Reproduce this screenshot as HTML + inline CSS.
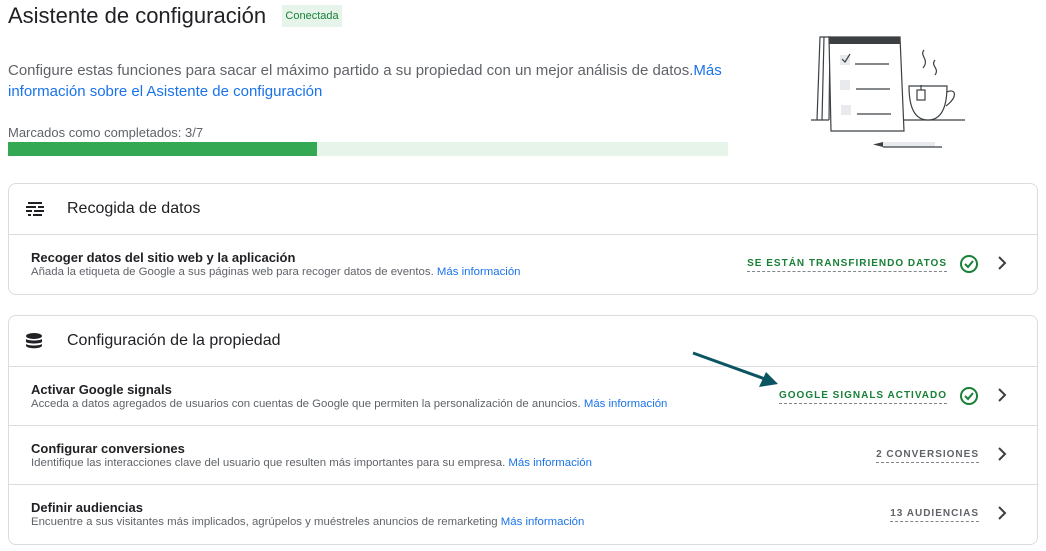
<!DOCTYPE html>
<html><head><meta charset="utf-8"><style>
*{margin:0;padding:0;box-sizing:border-box}
body{width:1046px;height:551px;background:#fff;font-family:"Liberation Sans",Arial,sans-serif;color:#202124;position:relative;overflow:hidden}
.abs{position:absolute}
.title{left:8px;top:3px;font-size:22px;color:#202124}
.chip{left:282px;top:5px;width:60px;height:22px;background:#e6f4ea;color:#188038;font-size:11px;line-height:22px;text-align:center}
.desc{left:8px;top:60px;width:730px;font-size:15px;line-height:21px;color:#5f6368}
.desc a{color:#1a73e8;text-decoration:none}
.lbl{left:8px;top:125px;font-size:13px;color:#5f6368}
.bar{left:8px;top:142px;width:720px;height:14px;background:#e6f4ea}
.bar div{width:309px;height:14px;background:#34a853}
.card{left:8px;width:1030px;border:1px solid #dadce0;border-radius:8px;background:#fff}
.hdr{height:51px;border-bottom:1px solid #dadce0;position:relative}
.hdr span{position:absolute;left:58px;top:16px;font-size:16px;color:#202124}
.row{height:59px;position:relative;border-bottom:1px solid #dadce0}
.row:last-child{border-bottom:none}
.row b{position:absolute;left:22px;top:15px;font-size:13px;font-weight:bold;color:#202124}
.row i{position:absolute;left:22px;top:31px;font-size:11.4px;font-style:normal;color:#5f6368;white-space:nowrap}
.row i a{color:#1a73e8}
.st{position:absolute;top:23px;font-size:10px;letter-spacing:1px;font-weight:bold;border-bottom:1px dashed #80868b;padding-bottom:2px}
.g{color:#188038}.n{color:#5f6368}
.chev{position:absolute;right:30px;top:20px}
.chk{position:absolute;right:58px;top:19px}
</style></head><body>
<div class="abs title">Asistente de configuración</div>
<div class="abs chip">Conectada</div>
<div class="abs desc">Configure estas funciones para sacar el máximo partido a su propiedad con un mejor análisis de datos.<a>Más información sobre el Asistente de configuración</a></div>
<div class="abs lbl">Marcados como completados: 3/7</div>
<div class="abs bar"><div></div></div>

<svg class="abs" style="left:0;top:0" width="1046" height="160">
<g fill="none" stroke="#3c4043" stroke-width="1.2">
<path d="M811 120H829M903 120H965"/>
<path d="M817 120 L820 37 H830 L829 120"/>
<path d="M822 120 L824 37"/>
<path d="M829 37 H900 L904 131 H831 Z" fill="#fff"/>
</g>
<rect x="829" y="37" width="71" height="7" fill="#3c4043"/>
<rect x="840" y="55" width="10" height="10" fill="#e8eaed"/>
<rect x="840" y="80" width="10" height="10" fill="#e8eaed"/>
<rect x="841" y="105" width="10" height="10" fill="#e8eaed"/>
<rect x="883" y="142" width="52" height="5" fill="#e8eaed"/>
<path d="M883 142 L873 144.5 L883 147 Z" fill="#3c4043"/>
<g fill="none" stroke="#3c4043" stroke-width="1.2">
<path d="M855 64H889M856 89H890M857 114H891"/>
<path d="M842 59l3 3 5-8"/>
<path d="M909 86 H947 c0 22 -6 34 -19 34 c-13 0 -19 -12 -19 -34z" fill="#fff"/>
<path d="M947 92 c8 -4 12 4 -1 14"/>
<path d="M924 50 c-5 6 6 9 -1 18 M935 60 c-5 6 5 8 0 15 M921 85 v5"/>
<rect x="917" y="90" width="8" height="10" fill="#fff"/>
<path d="M883 147 H942"/>
</g>
</svg>

<div class="abs card" style="top:183px">
<div class="hdr"><svg class="abs" style="left:17px;top:17px" width="18" height="16" viewBox="0 0 18 16"><g fill="#202124"><rect x="2" y="1" width="14" height="2"/><rect x="0" y="5" width="10" height="2"/><rect x="12" y="5" width="6" height="2"/><rect x="0" y="9" width="6" height="2"/><rect x="8" y="9" width="10" height="2"/><rect x="2" y="13" width="3" height="2"/><rect x="7" y="13" width="9" height="2"/></g></svg><span>Recogida de datos</span></div>
<div class="row"><b>Recoger datos del sitio web y la aplicación</b><i>Añada la etiqueta de Google a sus páginas web para recoger datos de eventos. <a>Más información</a></i>
<span class="st g" style="right:90px">SE ESTÁN TRANSFIRIENDO DATOS</span>
<svg class="chk" width="20" height="20" viewBox="0 0 20 20"><circle cx="10" cy="10" r="8" fill="none" stroke="#188038" stroke-width="2"/><path d="M6 10l3 3 5-6" fill="none" stroke="#188038" stroke-width="2"/></svg>
<svg class="chev" width="10" height="16" viewBox="0 0 10 16"><path d="M2 2l6 6-6 6" fill="none" stroke="#3c4043" stroke-width="2"/></svg></div>
</div>

<div class="abs card" style="top:315px">
<div class="hdr"><svg class="abs" style="left:17px;top:17px" width="16" height="16" viewBox="0 0 16 16"><g fill="#202124"><ellipse cx="8" cy="3" rx="8" ry="3"/><path d="M0 6c2 2 14 2 16 0v3c-2 2-14 2-16 0z"/><path d="M0 11c2 2 14 2 16 0v2c-2 3-14 3-16 0z"/></g></svg><span>Configuración de la propiedad</span></div>
<div class="row"><b>Activar Google signals</b><i>Acceda a datos agregados de usuarios con cuentas de Google que permiten la personalización de anuncios. <a>Más información</a></i>
<span class="st g" style="right:90px">GOOGLE SIGNALS ACTIVADO</span>
<svg class="chk" width="20" height="20" viewBox="0 0 20 20"><circle cx="10" cy="10" r="8" fill="none" stroke="#188038" stroke-width="2"/><path d="M6 10l3 3 5-6" fill="none" stroke="#188038" stroke-width="2"/></svg>
<svg class="chev" width="10" height="16" viewBox="0 0 10 16"><path d="M2 2l6 6-6 6" fill="none" stroke="#3c4043" stroke-width="2"/></svg></div>
<div class="row"><b>Configurar conversiones</b><i>Identifique las interacciones clave del usuario que resulten más importantes para su empresa. <a>Más información</a></i>
<span class="st n" style="right:58px">2 CONVERSIONES</span>
<svg class="chev" width="10" height="16" viewBox="0 0 10 16"><path d="M2 2l6 6-6 6" fill="none" stroke="#3c4043" stroke-width="2"/></svg></div>
<div class="row"><b>Definir audiencias</b><i>Encuentre a sus visitantes más implicados, agrúpelos y muéstreles anuncios de remarketing <a>Más información</a></i>
<span class="st n" style="right:58px">13 AUDIENCIAS</span>
<svg class="chev" width="10" height="16" viewBox="0 0 10 16"><path d="M2 2l6 6-6 6" fill="none" stroke="#3c4043" stroke-width="2"/></svg></div>
</div>

<svg class="abs" style="left:690px;top:350px" width="95" height="40" viewBox="0 0 95 40"><path d="M3 3 L75 29" stroke="#0b5563" stroke-width="3"/><path d="M88 34 L69 37 L76 22 Z" fill="#0b5563"/></svg>
</body></html>
